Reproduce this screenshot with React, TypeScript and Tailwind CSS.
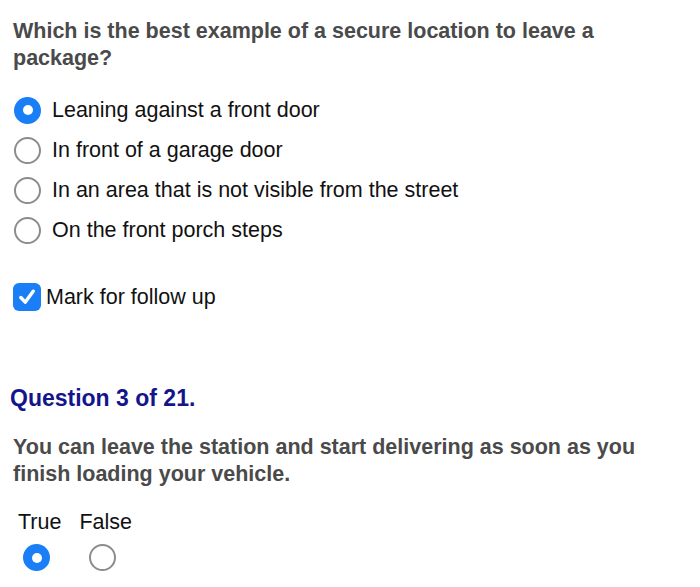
import React from "react";

function RadioOn() {
  return (
    <span className="flex h-[27px] w-[27px] shrink-0 items-center justify-center rounded-full bg-[#1a7ef6]">
      <span className="h-[10px] w-[10px] rounded-full bg-white" />
    </span>
  );
}

function RadioOff() {
  return <span className="block h-[27px] w-[27px] shrink-0 rounded-full border-[2.5px] border-[#8c8c8c] bg-white" />;
}

function Option({ selected, label }: { selected?: boolean; label: string }) {
  return (
    <div className="flex h-[40px] items-center">
      <div className="ml-[14px] mr-[11px]">{selected ? <RadioOn /> : <RadioOff />}</div>
      <span className="text-[21.5px] leading-[27px] text-[#111]">{label}</span>
    </div>
  );
}

export default function App() {
  return (
    <div
      className="min-h-[587px] w-[700px] bg-white"
      style={{ fontFamily: '"Liberation Sans", Arial, sans-serif' }}
    >
      <div className="flex flex-col pt-[18px]">
        <h1 className="ml-[13px] w-[640px] text-[21.5px] font-bold leading-[27px] text-[#4a4a4a]">
          Which is the best example of a secure location to leave a package?
        </h1>

        <div className="mt-[18px] flex flex-col">
          <Option selected label="Leaning against a front door" />
          <Option label="In front of a garage door" />
          <Option label="In an area that is not visible from the street" />
          <Option label="On the front porch steps" />
        </div>

        <div className="mt-[27px] flex h-[40px] items-center">
          <span className="ml-[13px] mr-[5px] flex h-[28px] w-[28px] items-center justify-center rounded-[6px] bg-[#1a7ef6]">
            <svg width="20" height="20" viewBox="0 0 20 20" fill="none">
              <path d="M3.8 10.5 L8.2 15.2 L16.2 4.2" stroke="white" strokeWidth="3.4" strokeLinecap="round" strokeLinejoin="round" />
            </svg>
          </span>
          <span className="text-[21.5px] leading-[27px] text-[#111]">Mark for follow up</span>
        </div>

        <h2 className="ml-[10px] mt-[67px] text-[23px] font-bold leading-[28px] text-[#14148c]">
          Question 3 of 21.
        </h2>

        <p className="ml-[13px] mt-[22px] w-[660px] text-[21.5px] font-bold leading-[27px] text-[#4a4a4a]">
          You can leave the station and start delivering as soon as you finish loading your vehicle.
        </p>

        <div className="ml-[18px] mt-[21px] flex gap-[18px]">
          <div className="flex flex-col items-center">
            <span className="text-[21.5px] leading-[27px] text-[#111]">True</span>
            <div className="mr-[6px] mt-[8px]">
              <RadioOn />
            </div>
          </div>
          <div className="flex flex-col items-center">
            <span className="text-[21.5px] leading-[27px] text-[#111]">False</span>
            <div className="mr-[6px] mt-[8px]">
              <RadioOff />
            </div>
          </div>
        </div>
      </div>
    </div>
  );
}
